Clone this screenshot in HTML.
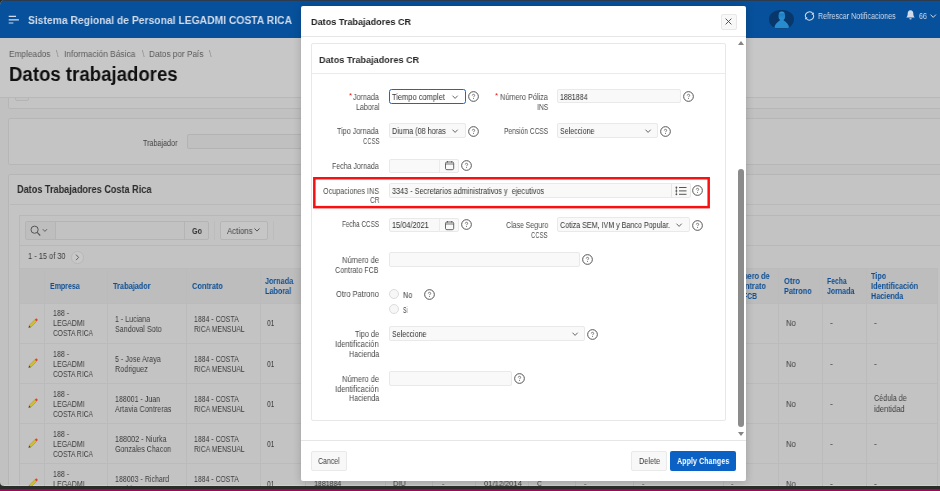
<!DOCTYPE html>
<html>
<head>
<meta charset="utf-8">
<title>Datos trabajadores</title>
<style>
*{box-sizing:border-box;margin:0;padding:0}
html,body{width:940px;height:491px;overflow:hidden;background:#a2055b}
body{font-family:"Liberation Sans",sans-serif;font-size:9px;line-height:1;color:#3a3a3a;position:relative}
.t,.b{position:absolute;display:block}
.t{white-space:nowrap;line-height:1;transform-origin:0 0;will-change:transform}
svg{position:absolute;display:block;overflow:visible}
#frame{position:absolute;left:0;top:0;width:940px;height:489px;background:#2a2c2a;overflow:hidden}
#win{position:absolute;left:0;top:0;width:940px;height:486px;background:#c1c1c1;border-radius:5px 0 0 4px;overflow:hidden}
</style>
</head>
<body>
<div id="frame">
<div id="win">
<div class="b" style="left:0.00px;top:0.00px;width:940.00px;height:38.00px;background:#07519c;"></div>
<div class="b" style="left:0.00px;top:0.00px;width:940.00px;height:1.00px;background:#2c3b4d;"></div>
<svg style="left:8px;top:14px" width="12" height="11" viewBox="0 0 12 11"><path d="M.7 2.300h7.300M.7 5.800h10.200M.7 9h4.700" stroke="#d2dbea" stroke-width="1.150" fill="none"/></svg>
<span class="t" style="left:28.00px;top:15.00px;font-size:11.50px;color:#d2dbea;transform:scaleX(0.8981);font-weight:bold;">Sistema Regional de Personal LEGADMI COSTA RICA</span>
<div class="b" style="left:768.80px;top:9.80px;width:25.60px;height:19.20px;background:#08376b;border-radius:11px / 9.600px;overflow:hidden;"><svg style="left:0;top:0" width="26" height="19" viewBox="0 0 26 19"><defs><linearGradient id="pg" x1="0" y1="0" x2="0" y2="1"><stop offset="0" stop-color="#3fa0dc"/><stop offset=".3" stop-color="#1f7fc4"/><stop offset="1" stop-color="#2b93d3"/></linearGradient></defs><ellipse cx="12.800" cy="5.900" rx="3.300" ry="4.300" fill="url(#pg)"/><path d="M11.400 9.300c-.2 2.200-5.400 2.600-6 8.900h14.800c-.6-6.300-5.800-6.700-6-8.900z" fill="#278bcd"/></svg></div>
<svg style="left:803.800px;top:10.500px" width="11" height="10" viewBox="0 0 11 10"><path d="M9.050 2.950A4.100 4.100 0 0 0 1.540 6.060M1.950 7.050A4.100 4.100 0 0 0 9.460 3.940" stroke="#d2dbea" stroke-width="1.050" fill="none"/><path d="M9.800 1.300v2.500H7.300zM1.200 8.700V6.200h2.500z" fill="#d2dbea"/></svg>
<span class="t" style="left:818.00px;top:12.00px;font-size:8.40px;color:#d2dbea;transform:scaleX(0.8566);">Refrescar Notificaciones</span>
<svg style="left:906px;top:10.300px" width="9" height="11" viewBox="0 0 9 11"><path d="M4.500 .3c-1.900 0-2.800 1.500-2.800 3.300 0 2-.6 3.100-1.400 3.900h8.400C7.900 6.700 7.300 5.600 7.300 3.600c0-1.800-.9-3.300-2.800-3.300zM3.300 8.300h2.400a1.200 1.200 0 0 1-2.400 0z" fill="#d2dbea"/></svg>
<span class="t" style="left:919.40px;top:12.00px;font-size:8.40px;color:#d2dbea;transform:scaleX(0.8366);">66</span>
<svg style="left:930px;top:14px" width="7" height="5" viewBox="0 0 7 5"><path d="M.5.600l2.700 2.800L5.900.6" stroke="#d2dbea" stroke-width="1" fill="none"/></svg>
<div class="b" style="left:8.40px;top:90.00px;width:960.00px;height:19.00px;background:#c4c4c4;border:1px solid #b6b6b6;border-radius:2px;"></div>
<div class="b" style="left:14.50px;top:92.00px;width:14.50px;height:9.00px;background:#c2c2c2;border:1px solid #b4b4b4;border-radius:2px;"></div>
<div class="b" style="left:0.00px;top:38.00px;width:940.00px;height:59.50px;background:#c7c7c7;"></div>
<div class="b" style="left:0.00px;top:97.00px;width:940.00px;height:1.00px;background:#b8b8b8;"></div>
<span class="t" style="left:9.00px;top:50.00px;font-size:9.20px;color:#5a5a5a;transform:scaleX(0.9013);">Empleados</span>
<span class="t" style="left:56.00px;top:50.00px;font-size:9.20px;color:#8c8c8c;transform:scaleX(0.9000);">\</span>
<span class="t" style="left:64.00px;top:50.00px;font-size:9.20px;color:#5a5a5a;transform:scaleX(0.9132);">Información Básica</span>
<span class="t" style="left:141.50px;top:50.00px;font-size:9.20px;color:#8c8c8c;transform:scaleX(0.9000);">\</span>
<span class="t" style="left:149.00px;top:50.00px;font-size:9.20px;color:#5a5a5a;transform:scaleX(0.8955);">Datos por País</span>
<span class="t" style="left:209.00px;top:50.00px;font-size:9.20px;color:#8c8c8c;transform:scaleX(0.9000);">\</span>
<span class="t" style="left:9.30px;top:65.00px;font-size:19.50px;color:#101010;transform:scaleX(0.9549);font-weight:bold;">Datos trabajadores</span>
<div class="b" style="left:8.40px;top:118.00px;width:960.00px;height:47.00px;background:#c4c4c4;border:1px solid #b6b6b6;border-radius:2px;"></div>
<span class="t" style="left:143.00px;top:139.00px;font-size:8.60px;color:#444;transform:scaleX(0.8358);">Trabajador</span>
<div class="b" style="left:187.00px;top:134.00px;width:400.00px;height:15.00px;background:#c0c0c0;border:1px solid #b3b3b3;border-radius:2px;"></div>
<div class="b" style="left:8.40px;top:174.00px;width:960.00px;height:330.00px;background:#c4c4c4;border:1px solid #b6b6b6;border-radius:2px;"></div>
<span class="t" style="left:17.00px;top:184.00px;font-size:11.00px;color:#2a2a2a;transform:scaleX(0.8298);font-weight:bold;">Datos Trabajadores Costa Rica</span>
<div class="b" style="left:10.00px;top:204.00px;width:930.00px;height:1.00px;background:#b9b9b9;"></div>
<div class="b" style="left:19.00px;top:214.50px;width:960.00px;height:300.00px;background:#c3c3c3;border:1px solid #b8b8b8;"></div>
<div class="b" style="left:20.00px;top:245.00px;width:920.00px;height:1.00px;background:#b8b8b8;"></div>
<div class="b" style="left:24.50px;top:220.50px;width:184.50px;height:19.50px;background:#c2c2c2;border:1px solid #b4b4b4;border-radius:2px;"></div>
<div class="b" style="left:55.00px;top:221.00px;width:1.00px;height:18.50px;background:#b4b4b4;"></div>
<div class="b" style="left:184.00px;top:221.00px;width:1.00px;height:18.50px;background:#b4b4b4;"></div>
<div class="b" style="left:25.50px;top:221.50px;width:29.50px;height:17.50px;background:#bebebe;"></div>
<svg style="left:29.500px;top:224.500px" width="20" height="12" viewBox="0 0 20 12"><circle cx="4.600" cy="4.700" r="3.600" stroke="#555" stroke-width="1" fill="none"/><path d="M7.200 7.400l3 3.100" stroke="#555" stroke-width="1.100"/><path d="M12.800 4.200l2.100 2.200 2.100-2.200" stroke="#555" stroke-width=".9" fill="none"/></svg>
<span class="t" style="left:191.50px;top:227.00px;font-size:8.40px;color:#333;transform:scaleX(0.8565);font-weight:bold;">Go</span>
<div class="b" style="left:213.50px;top:221.00px;width:1.00px;height:18.50px;background:#bcbcbc;"></div>
<div class="b" style="left:272.50px;top:221.00px;width:1.00px;height:18.50px;background:#bcbcbc;"></div>
<div class="b" style="left:219.50px;top:220.50px;width:48.00px;height:19.50px;background:#c6c6c6;border:1px solid #b5b5b5;border-radius:2px;"></div>
<span class="t" style="left:226.50px;top:227.00px;font-size:8.60px;color:#444;transform:scaleX(0.9040);">Actions</span>
<svg style="left:253.500px;top:227.500px" width="7" height="5" viewBox="0 0 7 5"><path d="M.5.500l2.500 2.600L5.500.5" stroke="#444" stroke-width=".9" fill="none"/></svg>
<span class="t" style="left:27.70px;top:252.00px;font-size:8.60px;color:#3c3c3c;transform:scaleX(0.8618);">1 - 15 of 30</span>
<div class="b" style="left:71.00px;top:251.00px;width:12.50px;height:12.50px;background:#c8c8c8;border:1px solid #b7b7b7;border-radius:50%;"></div>
<svg style="left:75px;top:254px" width="5" height="7" viewBox="0 0 5 7"><path d="M1 .600l2.600 2.800L1 6.200" stroke="#555" stroke-width=".9" fill="none"/></svg>
<div class="b" style="left:4.00px;top:485.00px;width:936.00px;height:1.00px;background:#d0d0d0;"></div>
<div class="b" style="left:19.50px;top:268.30px;width:918.00px;height:35.00px;background:#bdbdbd;"></div>
<div class="b" style="left:20.00px;top:268.00px;width:917.50px;height:1.00px;background:#bbbbbb;"></div>
<div class="b" style="left:20.00px;top:303.00px;width:917.50px;height:1.00px;background:#bbbbbb;"></div>
<div class="b" style="left:20.00px;top:342.60px;width:917.50px;height:1.00px;background:#bbbbbb;"></div>
<div class="b" style="left:20.00px;top:382.60px;width:917.50px;height:1.00px;background:#bbbbbb;"></div>
<div class="b" style="left:20.00px;top:422.60px;width:917.50px;height:1.00px;background:#bbbbbb;"></div>
<div class="b" style="left:20.00px;top:462.60px;width:917.50px;height:1.00px;background:#bbbbbb;"></div>
<div class="b" style="left:44.00px;top:268.50px;width:1.00px;height:217.50px;background:#bbbbbb;"></div>
<div class="b" style="left:107.00px;top:268.50px;width:1.00px;height:217.50px;background:#bbbbbb;"></div>
<div class="b" style="left:186.00px;top:268.50px;width:1.00px;height:217.50px;background:#bbbbbb;"></div>
<div class="b" style="left:260.00px;top:268.50px;width:1.00px;height:217.50px;background:#bbbbbb;"></div>
<div class="b" style="left:305.00px;top:268.50px;width:1.00px;height:217.50px;background:#bbbbbb;"></div>
<div class="b" style="left:384.80px;top:268.50px;width:1.00px;height:217.50px;background:#bbbbbb;"></div>
<div class="b" style="left:432.00px;top:268.50px;width:1.00px;height:217.50px;background:#bbbbbb;"></div>
<div class="b" style="left:475.30px;top:268.50px;width:1.00px;height:217.50px;background:#bbbbbb;"></div>
<div class="b" style="left:528.00px;top:268.50px;width:1.00px;height:217.50px;background:#bbbbbb;"></div>
<div class="b" style="left:574.70px;top:268.50px;width:1.00px;height:217.50px;background:#bbbbbb;"></div>
<div class="b" style="left:633.40px;top:268.50px;width:1.00px;height:217.50px;background:#bbbbbb;"></div>
<div class="b" style="left:722.50px;top:268.50px;width:1.00px;height:217.50px;background:#bbbbbb;"></div>
<div class="b" style="left:778.30px;top:268.50px;width:1.00px;height:217.50px;background:#bbbbbb;"></div>
<div class="b" style="left:821.50px;top:268.50px;width:1.00px;height:217.50px;background:#bbbbbb;"></div>
<div class="b" style="left:865.50px;top:268.50px;width:1.00px;height:217.50px;background:#bbbbbb;"></div>
<div class="b" style="left:937.40px;top:268.50px;width:1.00px;height:217.50px;background:#bbbbbb;"></div>
<span class="t" style="left:50.20px;top:282.00px;font-size:8.60px;color:#0d4f95;transform:scaleX(0.8182);font-weight:bold;">Empresa</span>
<span class="t" style="left:112.80px;top:282.00px;font-size:8.60px;color:#0d4f95;transform:scaleX(0.8570);font-weight:bold;">Trabajador</span>
<span class="t" style="left:191.60px;top:282.00px;font-size:8.60px;color:#0d4f95;transform:scaleX(0.8627);font-weight:bold;">Contrato</span>
<span class="t" style="left:264.80px;top:277.00px;font-size:8.60px;color:#0d4f95;transform:scaleX(0.8408);font-weight:bold;">Jornada</span>
<span class="t" style="left:264.80px;top:287.00px;font-size:8.60px;color:#0d4f95;transform:scaleX(0.8439);font-weight:bold;">Laboral</span>
<span class="t" style="left:731.00px;top:272.00px;font-size:8.60px;color:#0d4f95;transform:scaleX(0.8635);font-weight:bold;">Número de</span>
<span class="t" style="left:734.50px;top:282.00px;font-size:8.60px;color:#0d4f95;transform:scaleX(0.8655);font-weight:bold;">Contrato</span>
<span class="t" style="left:743.00px;top:292.00px;font-size:8.60px;color:#0d4f95;transform:scaleX(0.7922);font-weight:bold;">FCB</span>
<span class="t" style="left:783.60px;top:277.00px;font-size:8.60px;color:#0d4f95;transform:scaleX(0.8762);font-weight:bold;">Otro</span>
<span class="t" style="left:783.60px;top:287.00px;font-size:8.60px;color:#0d4f95;transform:scaleX(0.8521);font-weight:bold;">Patrono</span>
<span class="t" style="left:827.20px;top:277.00px;font-size:8.60px;color:#0d4f95;transform:scaleX(0.7939);font-weight:bold;">Fecha</span>
<span class="t" style="left:827.20px;top:287.00px;font-size:8.60px;color:#0d4f95;transform:scaleX(0.8140);font-weight:bold;">Jornada</span>
<span class="t" style="left:871.30px;top:272.00px;font-size:8.60px;color:#0d4f95;transform:scaleX(0.8457);font-weight:bold;">Tipo</span>
<span class="t" style="left:871.30px;top:282.00px;font-size:8.60px;color:#0d4f95;transform:scaleX(0.8480);font-weight:bold;">Identificación</span>
<span class="t" style="left:871.30px;top:292.00px;font-size:8.60px;color:#0d4f95;transform:scaleX(0.8404);font-weight:bold;">Hacienda</span>
<svg style="left:27.500px;top:317.5px" width="10" height="10" viewBox="0 0 11 11"><path d="M1.200 8.200L7.600 1.800l1.900 1.900L3.100 10.100z" fill="#d2bd30" stroke="#9a8a28" stroke-width=".5"/><path d="M7.600 1.800l.9-.9c.4-.4 1-.4 1.400 0l.5.500c.4.400.4 1 0 1.400l-.9.900z" fill="#d8432b"/><path d="M1.200 8.200l-.7 2.500 2.600-.6z" fill="#3a3a3a"/></svg>
<span class="t" style="left:52.80px;top:309.00px;font-size:8.80px;color:#3d3d3d;transform:scaleX(0.8074);">188 -</span>
<span class="t" style="left:52.80px;top:319.00px;font-size:8.80px;color:#3d3d3d;transform:scaleX(0.8005);">LEGADMI</span>
<span class="t" style="left:52.80px;top:329.00px;font-size:8.80px;color:#3d3d3d;transform:scaleX(0.7595);">COSTA RICA</span>
<span class="t" style="left:115.40px;top:315.00px;font-size:8.80px;color:#3d3d3d;transform:scaleX(0.8058);">1 - Luciana</span>
<span class="t" style="left:115.40px;top:325.00px;font-size:8.80px;color:#3d3d3d;transform:scaleX(0.8141);">Sandoval Soto</span>
<span class="t" style="left:194.30px;top:315.00px;font-size:8.80px;color:#3d3d3d;transform:scaleX(0.7833);">1884 - COSTA</span>
<span class="t" style="left:194.30px;top:325.00px;font-size:8.80px;color:#3d3d3d;transform:scaleX(0.7739);">RICA MENSUAL</span>
<span class="t" style="left:267.20px;top:319.00px;font-size:8.80px;color:#3d3d3d;transform:scaleX(0.7473);">01</span>
<span class="t" style="left:786.40px;top:319.00px;font-size:8.80px;color:#3d3d3d;transform:scaleX(0.8700);">No</span>
<span class="t" style="left:829.80px;top:319.00px;font-size:8.80px;color:#3d3d3d;transform:scaleX(0.8600);">-</span>
<span class="t" style="left:874.00px;top:319.00px;font-size:8.80px;color:#3d3d3d;transform:scaleX(0.8600);">-</span>
<svg style="left:27.500px;top:357.6px" width="10" height="10" viewBox="0 0 11 11"><path d="M1.200 8.200L7.600 1.800l1.900 1.900L3.100 10.100z" fill="#d2bd30" stroke="#9a8a28" stroke-width=".5"/><path d="M7.600 1.800l.9-.9c.4-.4 1-.4 1.400 0l.5.500c.4.400.4 1 0 1.400l-.9.900z" fill="#d8432b"/><path d="M1.200 8.200l-.7 2.500 2.600-.6z" fill="#3a3a3a"/></svg>
<span class="t" style="left:52.80px;top:350.00px;font-size:8.80px;color:#3d3d3d;transform:scaleX(0.8074);">188 -</span>
<span class="t" style="left:52.80px;top:360.00px;font-size:8.80px;color:#3d3d3d;transform:scaleX(0.8005);">LEGADMI</span>
<span class="t" style="left:52.80px;top:370.00px;font-size:8.80px;color:#3d3d3d;transform:scaleX(0.7595);">COSTA RICA</span>
<span class="t" style="left:115.40px;top:355.00px;font-size:8.80px;color:#3d3d3d;transform:scaleX(0.8138);">5 - Jose Araya</span>
<span class="t" style="left:115.40px;top:365.00px;font-size:8.80px;color:#3d3d3d;transform:scaleX(0.8174);">Rodriguez</span>
<span class="t" style="left:194.30px;top:355.00px;font-size:8.80px;color:#3d3d3d;transform:scaleX(0.7833);">1884 - COSTA</span>
<span class="t" style="left:194.30px;top:365.00px;font-size:8.80px;color:#3d3d3d;transform:scaleX(0.7739);">RICA MENSUAL</span>
<span class="t" style="left:267.20px;top:360.00px;font-size:8.80px;color:#3d3d3d;transform:scaleX(0.7473);">01</span>
<span class="t" style="left:786.40px;top:360.00px;font-size:8.80px;color:#3d3d3d;transform:scaleX(0.8700);">No</span>
<span class="t" style="left:829.80px;top:360.00px;font-size:8.80px;color:#3d3d3d;transform:scaleX(0.8600);">-</span>
<span class="t" style="left:874.00px;top:360.00px;font-size:8.80px;color:#3d3d3d;transform:scaleX(0.8600);">-</span>
<svg style="left:27.500px;top:397.7px" width="10" height="10" viewBox="0 0 11 11"><path d="M1.200 8.200L7.600 1.800l1.900 1.900L3.100 10.100z" fill="#d2bd30" stroke="#9a8a28" stroke-width=".5"/><path d="M7.600 1.800l.9-.9c.4-.4 1-.4 1.400 0l.5.500c.4.400.4 1 0 1.400l-.9.900z" fill="#d8432b"/><path d="M1.200 8.200l-.7 2.500 2.600-.6z" fill="#3a3a3a"/></svg>
<span class="t" style="left:52.80px;top:390.00px;font-size:8.80px;color:#3d3d3d;transform:scaleX(0.8074);">188 -</span>
<span class="t" style="left:52.80px;top:400.00px;font-size:8.80px;color:#3d3d3d;transform:scaleX(0.8005);">LEGADMI</span>
<span class="t" style="left:52.80px;top:410.00px;font-size:8.80px;color:#3d3d3d;transform:scaleX(0.7595);">COSTA RICA</span>
<span class="t" style="left:115.40px;top:395.00px;font-size:8.80px;color:#3d3d3d;transform:scaleX(0.8014);">188001 - Juan</span>
<span class="t" style="left:115.40px;top:405.00px;font-size:8.80px;color:#3d3d3d;transform:scaleX(0.8223);">Artavia Contreras</span>
<span class="t" style="left:194.30px;top:395.00px;font-size:8.80px;color:#3d3d3d;transform:scaleX(0.7833);">1884 - COSTA</span>
<span class="t" style="left:194.30px;top:405.00px;font-size:8.80px;color:#3d3d3d;transform:scaleX(0.7739);">RICA MENSUAL</span>
<span class="t" style="left:267.20px;top:400.00px;font-size:8.80px;color:#3d3d3d;transform:scaleX(0.7473);">01</span>
<span class="t" style="left:786.40px;top:400.00px;font-size:8.80px;color:#3d3d3d;transform:scaleX(0.8700);">No</span>
<span class="t" style="left:829.80px;top:400.00px;font-size:8.80px;color:#3d3d3d;transform:scaleX(0.8600);">-</span>
<span class="t" style="left:873.60px;top:394.00px;font-size:8.80px;color:#3d3d3d;transform:scaleX(0.8149);">Cédula de</span>
<span class="t" style="left:873.60px;top:405.00px;font-size:8.80px;color:#3d3d3d;transform:scaleX(0.8593);">identidad</span>
<svg style="left:27.500px;top:437.8px" width="10" height="10" viewBox="0 0 11 11"><path d="M1.200 8.200L7.600 1.800l1.900 1.900L3.100 10.100z" fill="#d2bd30" stroke="#9a8a28" stroke-width=".5"/><path d="M7.600 1.800l.9-.9c.4-.4 1-.4 1.400 0l.5.500c.4.400.4 1 0 1.400l-.9.900z" fill="#d8432b"/><path d="M1.200 8.200l-.7 2.500 2.600-.6z" fill="#3a3a3a"/></svg>
<span class="t" style="left:52.80px;top:430.00px;font-size:8.80px;color:#3d3d3d;transform:scaleX(0.8074);">188 -</span>
<span class="t" style="left:52.80px;top:440.00px;font-size:8.80px;color:#3d3d3d;transform:scaleX(0.8005);">LEGADMI</span>
<span class="t" style="left:52.80px;top:450.00px;font-size:8.80px;color:#3d3d3d;transform:scaleX(0.7595);">COSTA RICA</span>
<span class="t" style="left:115.40px;top:435.00px;font-size:8.80px;color:#3d3d3d;transform:scaleX(0.8235);">188002 - Niurka</span>
<span class="t" style="left:115.40px;top:445.00px;font-size:8.80px;color:#3d3d3d;transform:scaleX(0.8019);">Gonzales Chacon</span>
<span class="t" style="left:194.30px;top:435.00px;font-size:8.80px;color:#3d3d3d;transform:scaleX(0.7833);">1884 - COSTA</span>
<span class="t" style="left:194.30px;top:445.00px;font-size:8.80px;color:#3d3d3d;transform:scaleX(0.7739);">RICA MENSUAL</span>
<span class="t" style="left:267.20px;top:440.00px;font-size:8.80px;color:#3d3d3d;transform:scaleX(0.7473);">01</span>
<span class="t" style="left:786.40px;top:440.00px;font-size:8.80px;color:#3d3d3d;transform:scaleX(0.8700);">No</span>
<span class="t" style="left:829.80px;top:440.00px;font-size:8.80px;color:#3d3d3d;transform:scaleX(0.8600);">-</span>
<span class="t" style="left:874.00px;top:440.00px;font-size:8.80px;color:#3d3d3d;transform:scaleX(0.8600);">-</span>
<svg style="left:27.500px;top:477.9px" width="10" height="10" viewBox="0 0 11 11"><path d="M1.200 8.200L7.600 1.800l1.900 1.900L3.100 10.100z" fill="#d2bd30" stroke="#9a8a28" stroke-width=".5"/><path d="M7.600 1.800l.9-.9c.4-.4 1-.4 1.400 0l.5.500c.4.400.4 1 0 1.400l-.9.900z" fill="#d8432b"/><path d="M1.200 8.200l-.7 2.500 2.600-.6z" fill="#3a3a3a"/></svg>
<span class="t" style="left:52.80px;top:470.00px;font-size:8.80px;color:#3d3d3d;transform:scaleX(0.8074);">188 -</span>
<span class="t" style="left:52.80px;top:480.00px;font-size:8.80px;color:#3d3d3d;transform:scaleX(0.8005);">LEGADMI</span>
<span class="t" style="left:52.80px;top:490.00px;font-size:8.80px;color:#3d3d3d;transform:scaleX(0.7595);">COSTA RICA</span>
<span class="t" style="left:115.40px;top:475.00px;font-size:8.80px;color:#3d3d3d;transform:scaleX(0.8015);">188003 - Richard</span>
<span class="t" style="left:115.40px;top:485.00px;font-size:8.80px;color:#3d3d3d;transform:scaleX(0.8174);">Rodriguez</span>
<span class="t" style="left:194.30px;top:475.00px;font-size:8.80px;color:#3d3d3d;transform:scaleX(0.7833);">1884 - COSTA</span>
<span class="t" style="left:194.30px;top:485.00px;font-size:8.80px;color:#3d3d3d;transform:scaleX(0.7739);">RICA MENSUAL</span>
<span class="t" style="left:267.20px;top:480.00px;font-size:8.80px;color:#3d3d3d;transform:scaleX(0.7473);">01</span>
<span class="t" style="left:786.40px;top:480.00px;font-size:8.80px;color:#3d3d3d;transform:scaleX(0.8700);">No</span>
<span class="t" style="left:829.80px;top:480.00px;font-size:8.80px;color:#3d3d3d;transform:scaleX(0.8600);">-</span>
<span class="t" style="left:874.00px;top:480.00px;font-size:8.80px;color:#3d3d3d;transform:scaleX(0.8600);">-</span>
<span class="t" style="left:313.60px;top:480.00px;font-size:7.80px;color:#3d3d3d;transform:scaleX(0.8953);">1881884</span>
<span class="t" style="left:392.60px;top:480.00px;font-size:7.80px;color:#3d3d3d;transform:scaleX(0.9541);">DIU</span>
<span class="t" style="left:442.00px;top:480.00px;font-size:7.80px;color:#3d3d3d;transform:scaleX(0.8600);">-</span>
<span class="t" style="left:483.60px;top:480.00px;font-size:7.80px;color:#3d3d3d;transform:scaleX(0.9708);">01/12/2014</span>
<span class="t" style="left:537.30px;top:480.00px;font-size:7.80px;color:#3d3d3d;transform:scaleX(0.8600);">C</span>
<span class="t" style="left:584.00px;top:480.00px;font-size:7.80px;color:#3d3d3d;transform:scaleX(0.8600);">-</span>
<span class="t" style="left:642.00px;top:480.00px;font-size:7.80px;color:#3d3d3d;transform:scaleX(0.8600);">-</span>
<span class="t" style="left:731.00px;top:480.00px;font-size:7.80px;color:#3d3d3d;transform:scaleX(0.8600);">-</span>
<div class="b" style="left:301.00px;top:6.20px;width:445.00px;height:474.80px;background:#fff;border-radius:2px;box-shadow:0 1px 8px 0 rgba(0,0,0,.2);"></div>
<span class="t" style="left:311.20px;top:17.00px;font-size:9.90px;color:#222;transform:scaleX(0.9206);font-weight:bold;">Datos Trabajadores CR</span>
<div class="b" style="left:721.00px;top:14.00px;width:15.50px;height:15.50px;background:#f8f8f8;border:1px solid #e8e8e8;border-radius:2px;"></div>
<svg style="left:725.300px;top:18.400px" width="7" height="7" viewBox="0 0 7 7"><path d="M.6.600l5.800 5.800M6.400.6L.6 6.400" stroke="#444" stroke-width=".9"/></svg>
<div class="b" style="left:301.00px;top:36.00px;width:445.00px;height:1.00px;background:#e6e6e6;"></div>
<svg style="left:738px;top:41px" width="6" height="4" viewBox="0 0 6 4"><path d="M0 4L3 0l3 4z" fill="#858585"/></svg>
<div class="b" style="left:737.80px;top:168.60px;width:6.00px;height:258.90px;background:#8b8b8b;border-radius:3px;"></div>
<svg style="left:738px;top:432px" width="6" height="4" viewBox="0 0 6 4"><path d="M0 0h6L3 4z" fill="#858585"/></svg>
<div class="b" style="left:311.00px;top:43.00px;width:415.00px;height:378.00px;background:#fff;border:1px solid #e8e8e8;border-radius:2px;"></div>
<span class="t" style="left:319.20px;top:55.00px;font-size:9.90px;color:#2b2b2b;transform:scaleX(0.9215);font-weight:bold;">Datos Trabajadores CR</span>
<div class="b" style="left:312.00px;top:73.00px;width:413.00px;height:1.00px;background:#ebebeb;"></div>
<div class="b" style="left:301.00px;top:440.00px;width:445.00px;height:1.00px;background:#e6e6e6;"></div>
<div class="b" style="left:311.20px;top:451.00px;width:35.80px;height:19.70px;background:#f8f8f8;border:1px solid #e9e9e9;border-radius:2px;"></div>
<span class="t" style="left:318.40px;top:457.00px;font-size:8.80px;color:#3c3c3c;transform:scaleX(0.7880);">Cancel</span>
<div class="b" style="left:631.30px;top:451.00px;width:35.40px;height:19.70px;background:#f8f8f8;border:1px solid #e9e9e9;border-radius:2px;"></div>
<span class="t" style="left:638.70px;top:457.00px;font-size:8.80px;color:#3c3c3c;transform:scaleX(0.8297);">Delete</span>
<div class="b" style="left:670.00px;top:451.00px;width:66.00px;height:19.70px;background:#0b62c4;border-radius:2px;"></div>
<span class="t" style="left:676.90px;top:457.00px;font-size:8.80px;color:#fff;transform:scaleX(0.8164);font-weight:bold;">Apply Changes</span>
<span class="t" style="left:348.500px;top:91.500px;font-size:8px;color:#e02020">*</span>
<span class="t" style="left:353.30px;top:93.00px;font-size:8.60px;color:#4a4a4a;transform:scaleX(0.8319);">Jornada</span>
<span class="t" style="left:355.50px;top:103.00px;font-size:8.60px;color:#4a4a4a;transform:scaleX(0.8263);">Laboral</span>
<div class="b" style="left:389.00px;top:89.00px;width:76.50px;height:14.60px;background:#fff;border:1.600px solid #1469cc;border-radius:2.5px;"></div>
<span class="t" style="left:391.90px;top:93.00px;font-size:8.60px;color:#333;transform:scaleX(0.8694);">Tiempo complet</span>
<svg style="left:452.30px;top:94.80px" width="7" height="5" viewBox="0 0 7 5"><path d="M.5.700l2.600 2.700L5.700.7" stroke="#555" stroke-width=".9" fill="none"/></svg>
<svg style="left:467.80px;top:91.40px" width="11" height="11" viewBox="0 0 11 11"><circle cx="5.500" cy="5.500" r="4.850" stroke="#4c4c4c" stroke-width=".95" fill="#fff"/><path d="M4.300 4.500c0-.8.500-1.200 1.200-1.200s1.200.4 1.200 1.050c0 .85-1.150.95-1.150 1.850" stroke="#5c5c5c" stroke-width=".8" fill="none"/><circle cx="5.550" cy="7.600" r=".5" fill="#5c5c5c"/></svg>
<span class="t" style="left:494.500px;top:91.500px;font-size:8px;color:#e02020">*</span>
<span class="t" style="left:500.10px;top:93.00px;font-size:8.60px;color:#4a4a4a;transform:scaleX(0.8490);">Número Póliza</span>
<span class="t" style="left:536.60px;top:103.00px;font-size:8.60px;color:#4a4a4a;transform:scaleX(0.7961);">INS</span>
<div class="b" style="left:557.00px;top:89.30px;width:123.50px;height:14.20px;background:#f9f9f9;border:1px solid #e9e9e9;border-radius:2px;"></div>
<span class="t" style="left:560.40px;top:93.00px;font-size:8.60px;color:#333;transform:scaleX(0.8240);">1881884</span>
<svg style="left:682.50px;top:91.40px" width="11" height="11" viewBox="0 0 11 11"><circle cx="5.500" cy="5.500" r="4.850" stroke="#4c4c4c" stroke-width=".95" fill="#fff"/><path d="M4.300 4.500c0-.8.500-1.200 1.200-1.200s1.200.4 1.200 1.050c0 .85-1.150.95-1.150 1.850" stroke="#5c5c5c" stroke-width=".8" fill="none"/><circle cx="5.550" cy="7.600" r=".5" fill="#5c5c5c"/></svg>
<span class="t" style="left:337.30px;top:127.00px;font-size:8.60px;color:#4a4a4a;transform:scaleX(0.8373);">Tipo Jornada</span>
<span class="t" style="left:362.70px;top:137.00px;font-size:8.60px;color:#4a4a4a;transform:scaleX(0.6860);">CCSS</span>
<div class="b" style="left:389.00px;top:123.40px;width:76.70px;height:14.90px;background:#f9f9f9;border:1px solid #e9e9e9;border-radius:2px;"></div>
<span class="t" style="left:391.60px;top:127.00px;font-size:8.60px;color:#333;transform:scaleX(0.8381);">Diurna (08 horas</span>
<svg style="left:452.30px;top:129.20px" width="7" height="5" viewBox="0 0 7 5"><path d="M.5.700l2.600 2.700L5.700.7" stroke="#555" stroke-width=".9" fill="none"/></svg>
<svg style="left:468.10px;top:125.70px" width="11" height="11" viewBox="0 0 11 11"><circle cx="5.500" cy="5.500" r="4.850" stroke="#4c4c4c" stroke-width=".95" fill="#fff"/><path d="M4.300 4.500c0-.8.500-1.200 1.200-1.200s1.200.4 1.200 1.050c0 .85-1.150.95-1.150 1.850" stroke="#5c5c5c" stroke-width=".8" fill="none"/><circle cx="5.550" cy="7.600" r=".5" fill="#5c5c5c"/></svg>
<span class="t" style="left:503.50px;top:127.00px;font-size:8.60px;color:#4a4a4a;transform:scaleX(0.7723);">Pensión CCSS</span>
<div class="b" style="left:557.00px;top:123.40px;width:101.20px;height:14.90px;background:#f9f9f9;border:1px solid #e9e9e9;border-radius:2px;"></div>
<span class="t" style="left:560.20px;top:127.00px;font-size:8.60px;color:#333;transform:scaleX(0.8180);">Seleccione</span>
<svg style="left:645.00px;top:129.20px" width="7" height="5" viewBox="0 0 7 5"><path d="M.5.700l2.600 2.700L5.700.7" stroke="#555" stroke-width=".9" fill="none"/></svg>
<svg style="left:660.10px;top:125.70px" width="11" height="11" viewBox="0 0 11 11"><circle cx="5.500" cy="5.500" r="4.850" stroke="#4c4c4c" stroke-width=".95" fill="#fff"/><path d="M4.300 4.500c0-.8.500-1.200 1.200-1.200s1.200.4 1.200 1.050c0 .85-1.150.95-1.150 1.850" stroke="#5c5c5c" stroke-width=".8" fill="none"/><circle cx="5.550" cy="7.600" r=".5" fill="#5c5c5c"/></svg>
<span class="t" style="left:332.30px;top:162.00px;font-size:8.60px;color:#4a4a4a;transform:scaleX(0.8153);">Fecha Jornada</span>
<div class="b" style="left:389.00px;top:158.70px;width:70.00px;height:14.10px;background:#f9f9f9;border:1px solid #e9e9e9;border-radius:2px;"></div>
<div class="b" style="left:438.70px;top:159.50px;width:1.00px;height:12.50px;background:#ebebeb;"></div>
<svg style="left:445.00px;top:161.30px" width="9.200" height="9.200" viewBox="0 0 9.200 9.200"><rect x=".5" y="1" width="8.200" height="7.700" rx="1.400" stroke="#555" stroke-width=".9" fill="none"/><path d="M.5 3h8.200" stroke="#555" stroke-width=".8"/><path d="M2.500 0v1.500M6.700 0v1.500" stroke="#555" stroke-width=".9"/></svg>
<svg style="left:460.90px;top:160.20px" width="11" height="11" viewBox="0 0 11 11"><circle cx="5.500" cy="5.500" r="4.850" stroke="#4c4c4c" stroke-width=".95" fill="#fff"/><path d="M4.300 4.500c0-.8.500-1.200 1.200-1.200s1.200.4 1.200 1.050c0 .85-1.150.95-1.150 1.850" stroke="#5c5c5c" stroke-width=".8" fill="none"/><circle cx="5.550" cy="7.600" r=".5" fill="#5c5c5c"/></svg>
<span class="t" style="left:323.00px;top:187.00px;font-size:8.60px;color:#4a4a4a;transform:scaleX(0.8385);">Ocupaciones INS</span>
<span class="t" style="left:369.60px;top:196.00px;font-size:8.60px;color:#4a4a4a;transform:scaleX(0.7645);">CR</span>
<div class="b" style="left:389.00px;top:183.40px;width:301.60px;height:14.40px;background:#f9f9f9;border:1px solid #e9e9e9;border-radius:2px;"></div>
<div class="b" style="left:671.40px;top:184.30px;width:1.00px;height:12.70px;background:#e6e6e6;"></div>
<span class="t" style="left:391.60px;top:187.00px;font-size:8.60px;color:#333;transform:scaleX(0.8468);">3343 - Secretarios administrativos y &nbsp;ejecutivos</span>
<svg style="left:674.500px;top:185.500px" width="12" height="10" viewBox="0 0 12 10"><path d="M4 1.500h7.500M4 4.900h7.500M4 8.300h7.500" stroke="#555" stroke-width="1"/><circle cx="1.400" cy="1.500" r=".9" fill="#555"/><circle cx="1.400" cy="4.900" r=".9" fill="#555"/><circle cx="1.400" cy="8.300" r=".9" fill="#555"/><path d="M1.400 1.500v6.800" stroke="#555" stroke-width=".6"/></svg>
<svg style="left:692.40px;top:185.10px" width="11" height="11" viewBox="0 0 11 11"><circle cx="5.500" cy="5.500" r="4.850" stroke="#4c4c4c" stroke-width=".95" fill="#fff"/><path d="M4.300 4.500c0-.8.500-1.200 1.200-1.200s1.200.4 1.200 1.050c0 .85-1.150.95-1.150 1.850" stroke="#5c5c5c" stroke-width=".8" fill="none"/><circle cx="5.550" cy="7.600" r=".5" fill="#5c5c5c"/></svg>
<svg style="left:313.100px;top:176.500px" width="397" height="31.400" viewBox="0 0 397 31.400"><rect x="1.250" y="1.250" width="394.500" height="28.900" stroke="#fa1010" stroke-width="2.500" fill="none"/></svg>
<span class="t" style="left:342.00px;top:220.00px;font-size:8.60px;color:#4a4a4a;transform:scaleX(0.7393);">Fecha CCSS</span>
<div class="b" style="left:389.00px;top:218.20px;width:70.00px;height:14.10px;background:#f9f9f9;border:1px solid #e9e9e9;border-radius:2px;"></div>
<div class="b" style="left:438.70px;top:219.00px;width:1.00px;height:12.50px;background:#ebebeb;"></div>
<span class="t" style="left:391.60px;top:221.00px;font-size:8.60px;color:#333;transform:scaleX(0.8526);">15/04/2021</span>
<svg style="left:445.00px;top:220.80px" width="9.200" height="9.200" viewBox="0 0 9.200 9.200"><rect x=".5" y="1" width="8.200" height="7.700" rx="1.400" stroke="#555" stroke-width=".9" fill="none"/><path d="M.5 3h8.200" stroke="#555" stroke-width=".8"/><path d="M2.500 0v1.500M6.700 0v1.500" stroke="#555" stroke-width=".9"/></svg>
<svg style="left:460.90px;top:219.20px" width="11" height="11" viewBox="0 0 11 11"><circle cx="5.500" cy="5.500" r="4.850" stroke="#4c4c4c" stroke-width=".95" fill="#fff"/><path d="M4.300 4.500c0-.8.500-1.200 1.200-1.200s1.200.4 1.200 1.050c0 .85-1.150.95-1.150 1.850" stroke="#5c5c5c" stroke-width=".8" fill="none"/><circle cx="5.550" cy="7.600" r=".5" fill="#5c5c5c"/></svg>
<span class="t" style="left:505.50px;top:221.00px;font-size:8.60px;color:#4a4a4a;transform:scaleX(0.8117);">Clase Seguro</span>
<span class="t" style="left:531.40px;top:231.00px;font-size:8.60px;color:#4a4a4a;transform:scaleX(0.6860);">CCSS</span>
<div class="b" style="left:557.00px;top:217.40px;width:133.30px;height:14.90px;background:#f9f9f9;border:1px solid #e9e9e9;border-radius:2px;"></div>
<span class="t" style="left:560.20px;top:221.00px;font-size:8.60px;color:#333;transform:scaleX(0.8286);">Cotiza SEM, IVM y Banco Popular.</span>
<svg style="left:676.40px;top:223.30px" width="7" height="5" viewBox="0 0 7 5"><path d="M.5.700l2.600 2.700L5.700.7" stroke="#555" stroke-width=".9" fill="none"/></svg>
<svg style="left:692.00px;top:219.50px" width="11" height="11" viewBox="0 0 11 11"><circle cx="5.500" cy="5.500" r="4.850" stroke="#4c4c4c" stroke-width=".95" fill="#fff"/><path d="M4.300 4.500c0-.8.500-1.200 1.200-1.200s1.200.4 1.200 1.050c0 .85-1.150.95-1.150 1.850" stroke="#5c5c5c" stroke-width=".8" fill="none"/><circle cx="5.550" cy="7.600" r=".5" fill="#5c5c5c"/></svg>
<span class="t" style="left:342.00px;top:256.00px;font-size:8.60px;color:#4a4a4a;transform:scaleX(0.8700);">Número de</span>
<span class="t" style="left:335.40px;top:266.00px;font-size:8.60px;color:#4a4a4a;transform:scaleX(0.8291);">Contrato FCB</span>
<div class="b" style="left:389.00px;top:252.00px;width:190.60px;height:14.50px;background:#f9f9f9;border:1px solid #e9e9e9;border-radius:2px;"></div>
<svg style="left:581.50px;top:254.40px" width="11" height="11" viewBox="0 0 11 11"><circle cx="5.500" cy="5.500" r="4.850" stroke="#4c4c4c" stroke-width=".95" fill="#fff"/><path d="M4.300 4.500c0-.8.500-1.200 1.200-1.200s1.200.4 1.200 1.050c0 .85-1.150.95-1.150 1.850" stroke="#5c5c5c" stroke-width=".8" fill="none"/><circle cx="5.550" cy="7.600" r=".5" fill="#5c5c5c"/></svg>
<span class="t" style="left:336.20px;top:290.00px;font-size:8.60px;color:#4a4a4a;transform:scaleX(0.8693);">Otro Patrono</span>
<div class="b" style="left:389.20px;top:289.40px;width:10.00px;height:10.00px;background:#f7f7f7;border:1px solid #dcdcdc;border-radius:50%;"></div>
<span class="t" style="left:403.00px;top:291.00px;font-size:8.60px;color:#333;transform:scaleX(0.8358);">No</span>
<div class="b" style="left:389.20px;top:304.20px;width:10.00px;height:10.00px;background:#f7f7f7;border:1px solid #dcdcdc;border-radius:50%;"></div>
<span class="t" style="left:403.00px;top:306.00px;font-size:8.60px;color:#333;transform:scaleX(0.6141);">Si</span>
<svg style="left:423.90px;top:289.10px" width="11" height="11" viewBox="0 0 11 11"><circle cx="5.500" cy="5.500" r="4.850" stroke="#4c4c4c" stroke-width=".95" fill="#fff"/><path d="M4.300 4.500c0-.8.500-1.200 1.200-1.200s1.200.4 1.200 1.050c0 .85-1.150.95-1.150 1.850" stroke="#5c5c5c" stroke-width=".8" fill="none"/><circle cx="5.550" cy="7.600" r=".5" fill="#5c5c5c"/></svg>
<span class="t" style="left:354.80px;top:330.00px;font-size:8.60px;color:#4a4a4a;transform:scaleX(0.8527);">Tipo de</span>
<span class="t" style="left:335.40px;top:340.00px;font-size:8.60px;color:#4a4a4a;transform:scaleX(0.8689);">Identificación</span>
<span class="t" style="left:348.70px;top:350.00px;font-size:8.60px;color:#4a4a4a;transform:scaleX(0.8329);">Hacienda</span>
<div class="b" style="left:389.00px;top:326.00px;width:195.90px;height:14.60px;background:#f9f9f9;border:1px solid #e9e9e9;border-radius:2px;"></div>
<span class="t" style="left:391.60px;top:330.00px;font-size:8.60px;color:#333;transform:scaleX(0.8180);">Seleccione</span>
<svg style="left:571.70px;top:331.70px" width="7" height="5" viewBox="0 0 7 5"><path d="M.5.700l2.600 2.700L5.700.7" stroke="#555" stroke-width=".9" fill="none"/></svg>
<svg style="left:586.80px;top:328.50px" width="11" height="11" viewBox="0 0 11 11"><circle cx="5.500" cy="5.500" r="4.850" stroke="#4c4c4c" stroke-width=".95" fill="#fff"/><path d="M4.300 4.500c0-.8.500-1.200 1.200-1.200s1.200.4 1.200 1.050c0 .85-1.150.95-1.150 1.850" stroke="#5c5c5c" stroke-width=".8" fill="none"/><circle cx="5.550" cy="7.600" r=".5" fill="#5c5c5c"/></svg>
<span class="t" style="left:341.90px;top:375.00px;font-size:8.60px;color:#4a4a4a;transform:scaleX(0.8724);">Número de</span>
<span class="t" style="left:335.40px;top:385.00px;font-size:8.60px;color:#4a4a4a;transform:scaleX(0.8689);">Identificación</span>
<span class="t" style="left:348.70px;top:394.00px;font-size:8.60px;color:#4a4a4a;transform:scaleX(0.8329);">Hacienda</span>
<div class="b" style="left:388.80px;top:370.70px;width:122.80px;height:15.20px;background:#f9f9f9;border:1px solid #e9e9e9;border-radius:2px;"></div>
<svg style="left:513.50px;top:373.20px" width="11" height="11" viewBox="0 0 11 11"><circle cx="5.500" cy="5.500" r="4.850" stroke="#4c4c4c" stroke-width=".95" fill="#fff"/><path d="M4.300 4.500c0-.8.500-1.200 1.200-1.200s1.200.4 1.200 1.050c0 .85-1.150.95-1.150 1.850" stroke="#5c5c5c" stroke-width=".8" fill="none"/><circle cx="5.550" cy="7.600" r=".5" fill="#5c5c5c"/></svg>
</div>
</div>
</body>
</html>
